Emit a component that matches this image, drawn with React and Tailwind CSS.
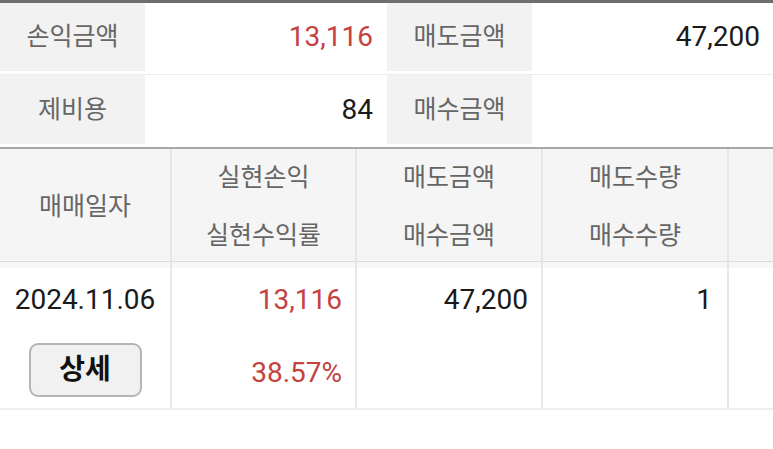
const FONT = "font-['Roboto','Noto_Sans_CJK_KR',sans-serif]";

const SummaryRow = ({ label1, value1, red, label2, value2, last }) => (
  <div
    className={`grid grid-cols-[145px_242px_145px_1fr] h-[72px] pb-[3px] ${
      last ? "" : "border-b border-[#ececec]"
    }`}
  >
    <div className="bg-[#f2f2f2] flex items-center justify-center text-[25px] text-[#666]">
      {label1}
    </div>
    <div
      className={`flex items-center justify-end pr-[14px] text-[28px] ${
        red ? "text-[#c5423f]" : "text-[#1a1a1a]"
      }`}
    >
      {value1}
    </div>
    <div className="bg-[#f2f2f2] flex items-center justify-center text-[25px] text-[#666]">
      {label2}
    </div>
    <div className="flex items-center justify-end pr-[13px] text-[28px] text-[#1a1a1a]">
      {value2}
    </div>
  </div>
);

const HeadCell = ({ top, bottom, single }) => (
  <div className="border-r-2 border-[#e6e6e6] flex flex-col items-center justify-center text-[25px] text-[#666] pb-[8px]">
    {single ? (
      <span>{single}</span>
    ) : (
      <>
        <span className="leading-[58px]">{top}</span>
        <span className="leading-[58px]">{bottom}</span>
      </>
    )}
  </div>
);

export default function App() {
  return (
    <div className={`${FONT} w-[773px] h-[449px] bg-white overflow-hidden`}>
      <div className="h-[3px] bg-[#6e6e6e]" />
      <SummaryRow label1="손익금액" value1="13,116" red label2="매도금액" value2="47,200" />
      <SummaryRow label1="제비용" value1="84" label2="매수금액" value2="" last />
      <div className="h-[2px] bg-[#a8a8a8]" />

      <div className="grid grid-cols-[172px_185px_186px_186px_1fr] h-[113px] bg-[#f5f5f5] border-b border-[#dcdcdc]">
        <HeadCell single="매매일자" />
        <HeadCell top="실현손익" bottom="실현수익률" />
        <HeadCell top="매도금액" bottom="매수금액" />
        <HeadCell top="매도수량" bottom="매수수량" />
        <div />
      </div>
      <div className="h-[6px] bg-[#f7f7f7]" />

      <div className="grid grid-cols-[172px_185px_186px_186px_1fr] h-[142px] border-b-2 border-[#eeeeee] text-[28px]">
        <div className="border-r-2 border-[#e8e8e8] flex flex-col items-center pt-[16px]">
          <span className="text-[#1a1a1a] leading-[32px]">2024.11.06</span>
          <button className="mt-[27px] w-[113px] h-[54px] rounded-[9px] border-2 border-[#b5b5b5] bg-[#f1f1f1] text-[28px] font-bold text-[#111] leading-none">
            상세
          </button>
        </div>
        <div className="border-r-2 border-[#e8e8e8] flex flex-col items-end pr-[13px] pt-[16px] text-[#c5423f]">
          <span className="leading-[32px]">13,116</span>
          <span className="leading-[32px] mt-[41px]">38.57%</span>
        </div>
        <div className="border-r-2 border-[#e8e8e8] flex flex-col items-end pr-[13px] pt-[16px] text-[#1a1a1a]">
          <span className="leading-[32px]">47,200</span>
        </div>
        <div className="border-r-2 border-[#e8e8e8] flex flex-col items-end pr-[15px] pt-[16px] text-[#1a1a1a]">
          <span className="leading-[32px]">1</span>
        </div>
        <div />
      </div>
    </div>
  );
}
